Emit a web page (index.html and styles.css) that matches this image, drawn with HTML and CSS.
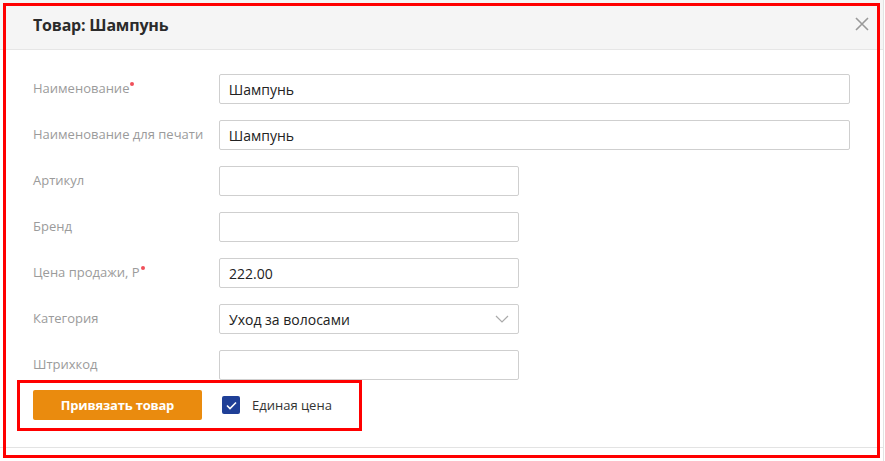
FILE: index.html
```html
<!doctype html>
<html lang="ru">
<head>
    <meta charset="UTF-8">
    <title>Товар: Шампунь</title>
    <link rel="stylesheet" href="styles.css">
</head>
<body>
<div class="modal">
    <div class="modal-head">
        <h2>Товар: Шампунь</h2>
        <span class="close">
            <svg width="14" height="14" viewBox="0 0 14 14"><path d="M1 1L13 13M13 1L1 13" stroke="#999" stroke-width="1.6" fill="none"/></svg>
        </span>
    </div>
    <div class="modal-body">
        <div class="row">
            <label>Наименование<i class="req"></i></label>
            <input class="field wide" type="text" value="Шампунь">
        </div>
        <div class="row">
            <label>Наименование для печати</label>
            <input class="field wide" type="text" value="Шампунь">
        </div>
        <div class="row">
            <label>Артикул</label>
            <input class="field" type="text" value="">
        </div>
        <div class="row">
            <label>Бренд</label>
            <input class="field" type="text" value="">
        </div>
        <div class="row">
            <label>Цена продажи, Р<i class="req"></i></label>
            <input class="field" type="text" value="222.00">
        </div>
        <div class="row">
            <label>Категория</label>
            <div class="field select">
                <span>Уход за волосами</span>
                <svg width="14" height="8" viewBox="0 0 14 8"><path d="M1 1L7 7L13 1" stroke="#aaa" stroke-width="1.2" fill="none"/></svg>
            </div>
        </div>
        <div class="row">
            <label>Штрихкод</label>
            <input class="field" type="text" value="">
        </div>
        <div class="actions">
            <button class="btn-orange">Привязать товар</button>
            <span class="check">
                <svg width="11" height="9" viewBox="0 0 11 9"><path d="M1 4.5L4 7.5L10 1.5" stroke="#fff" stroke-width="1.6" fill="none"/></svg>
            </span>
            <span class="check-label">Единая цена</span>
        </div>
    </div>
    <div class="modal-foot"></div>
</div>
<div class="mark mark-outer"></div>
<div class="mark mark-inner"></div>
</body>
</html>
```

FILE: styles.css
```css
*{
    padding: 0;
    margin: 0;
    box-sizing: border-box;
}
body{
    background-color: #fff;
    font-family: "Open Sans", "Liberation Sans", sans-serif;
    width: 885px;
    height: 461px;
    overflow: hidden;
    position: relative;
}
.modal{
    width: 884px;
    height: 461px;
    border-right: 1px solid #e3e3e3;
    background-color: #fff;
}
.modal-head{
    height: 50px;
    background-color: #f5f5f5;
    border-bottom: 1px solid #e6e6e6;
    display: flex;
    align-items: center;
    justify-content: space-between;
    padding: 0 14px 0 33px;
}
.modal-head h2{
    font-size: 16px;
    font-weight: 700;
    color: #2b2b2b;
    letter-spacing: -0.2px;
}
.close{
    display: flex;
    margin-top: -1px;
}
.modal-body{
    padding: 24px 33px 0 33px;
    height: 397px;
}
.row{
    display: flex;
    align-items: center;
    margin-bottom: 16px;
}
.row label{
    width: 186px;
    font-size: 13px;
    color: #9b9b9b;
    position: relative;
    margin-top: -3px;
}
.req{
    display: inline-block;
    width: 4px;
    height: 4px;
    border-radius: 50%;
    background-color: #f0505a;
    vertical-align: top;
    margin-left: 1px;
    margin-top: 3px;
}
.field{
    width: 300px;
    height: 30px;
    border: 1px solid #cfcfcf;
    border-radius: 2px;
    padding: 0 9px;
    font-family: inherit;
    font-size: 14px;
    color: #222;
    background-color: #fff;
    outline: none;
}
.field.wide{
    width: 632px;
}
.select{
    display: flex;
    align-items: center;
    justify-content: space-between;
    padding: 0 9px 0 9px;
}
.actions{
    display: flex;
    align-items: center;
    margin-top: -6px;
}
.btn-orange{
    width: 169px;
    height: 30px;
    border: none;
    border-radius: 2px;
    background-color: #ea8b0e;
    color: #fff;
    font-family: inherit;
    font-size: 13px;
    font-weight: 700;
    letter-spacing: -0.2px;
}
.check{
    width: 18px;
    height: 18px;
    border-radius: 2px;
    background-color: #1f3f97;
    margin-left: 20px;
    display: flex;
    align-items: center;
    justify-content: center;
}
.check-label{
    margin-left: 12px;
    font-size: 13px;
    color: #333;
}
.modal-foot{
    border-top: 1px solid #e3e3e3;
}
.mark{
    position: absolute;
    border: 3px solid #ff0000;
}
.mark-outer{
    left: 3px;
    top: 3px;
    width: 877px;
    height: 455px;
}
.mark-inner{
    left: 17px;
    top: 380px;
    width: 345px;
    height: 51px;
}
```
